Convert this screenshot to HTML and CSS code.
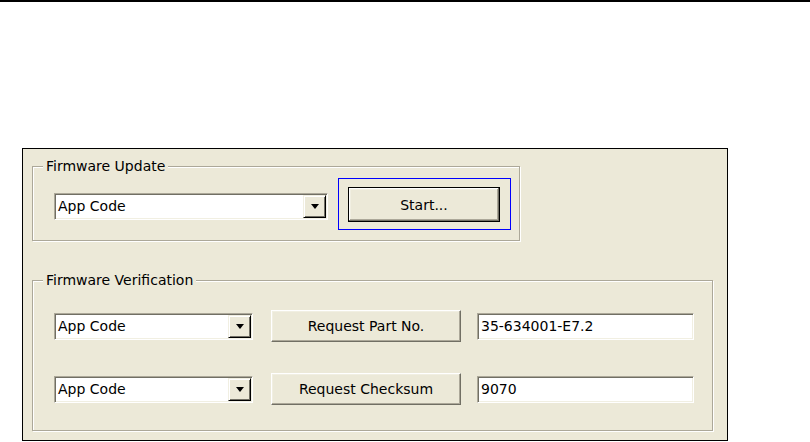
FILE: index.html
```html
<!DOCTYPE html>
<html lang="en">

<head>
    <meta charset="UTF-8">
    <title>Firmware</title>
    <link rel="stylesheet" href="styles.css">
</head>

<body>
    <div class="rule"></div>

    <div class="panel">
        <fieldset class="group group-update">
            <legend>Firmware Update</legend>
            <div class="update-row">
                <div class="combo combo-wide">
                    <span class="combo-text">App Code</span>
                    <span class="drop"><span class="arrow"></span></span>
                </div>
                <div class="focus-ring">
                    <button class="btn btn-default">Start...</button>
                </div>
            </div>
        </fieldset>

        <fieldset class="group group-verify">
            <legend>Firmware Verification</legend>
            <div class="verify-grid">
                <div class="combo">
                    <span class="combo-text">App Code</span>
                    <span class="drop"><span class="arrow"></span></span>
                </div>
                <button class="btn">Request Part No.</button>
                <div class="field">35-634001-E7.2</div>

                <div class="combo">
                    <span class="combo-text">App Code</span>
                    <span class="drop"><span class="arrow"></span></span>
                </div>
                <button class="btn">Request Checksum</button>
                <div class="field">9070</div>
            </div>
        </fieldset>
    </div>
</body>

</html>
```

FILE: styles.css
```css
:root {
    --face: #ece9d8;
    --shadow: #aca899;
    --dark: #716f64;
    --light: #f1efe2;
    --ui-font: "DejaVu Sans", Verdana, sans-serif;
}

* {
    margin: 0;
    padding: 0;
    box-sizing: border-box;
}

body {
    background: #ffffff;
    font-family: var(--ui-font);
    font-size: 14px;
    color: #000000;
}

.rule {
    height: 2px;
    background: #000000;
}

.panel {
    width: 706px;
    margin: 146px 0 0 22px;
    padding: 9px 0 9px 9px;
    background: var(--face);
    border: 1px solid #000000;
}

/* etched group boxes */
.group {
    border: 1px solid var(--shadow);
    box-shadow: inset 1px 1px #ffffff, 1px 1px #ffffff;
}

.group legend {
    margin-left: 10px;
    padding: 0 3px;
    line-height: 16px;
    background: var(--face);
}

.group-update {
    width: 488px;
}

.group-verify {
    width: 681px;
    margin-top: 31px;
}

.update-row {
    display: flex;
    align-items: center;
    gap: 10px;
    padding: 4px 0 10px 21px;
}

.verify-grid {
    display: grid;
    grid-template-columns: 199px 190px 215px;
    column-gap: 18px;
    row-gap: 31px;
    align-items: center;
    padding: 22px 0 25px 21px;
}

.verify-grid .btn {
    width: 190px;
    height: 32px;
}

.verify-grid .field {
    margin-left: -2px;
}

/* sunken controls */
.combo,
.field {
    display: flex;
    align-items: center;
    height: 27px;
    background: #ffffff;
    border: 1px solid;
    border-color: var(--shadow) #ffffff #ffffff var(--shadow);
    box-shadow: inset 1px 1px var(--dark), inset -1px -1px var(--light);
    white-space: nowrap;
}

.combo-wide {
    width: 274px;
    margin-top: 4px;
}

.combo-text {
    flex: 1;
    padding-left: 3px;
}

.field {
    padding-left: 3px;
}

.drop {
    display: flex;
    align-items: center;
    justify-content: center;
    width: 23px;
    height: 23px;
    margin-right: 1px;
    background: var(--face);
    border: 1px solid;
    border-color: var(--light) #000000 #000000 var(--light);
    box-shadow: inset 1px 1px #ffffff, inset -1px -1px var(--dark);
}

.arrow {
    width: 0;
    height: 0;
    border-left: 4px solid transparent;
    border-right: 4px solid transparent;
    border-top: 5px solid #000000;
    margin-top: 1px;
}

/* raised buttons */
.btn {
    font-family: var(--ui-font);
    font-size: 14px;
    color: #000000;
    background: var(--face);
    border: 1px solid;
    border-color: #ffffff var(--dark) var(--dark) #ffffff;
    box-shadow: inset -1px -1px var(--shadow), inset 1px 1px var(--light);
    cursor: pointer;
}

.btn-default {
    width: 152px;
    height: 35px;
    border-color: #000000;
    box-shadow: inset -1px -1px var(--dark), inset 1px 1px #ffffff, inset -2px -2px var(--shadow), inset 2px 2px var(--light);
}

.focus-ring {
    padding: 8px 10px 7px 9px;
    border: 1px solid #0000ff;
}
```
